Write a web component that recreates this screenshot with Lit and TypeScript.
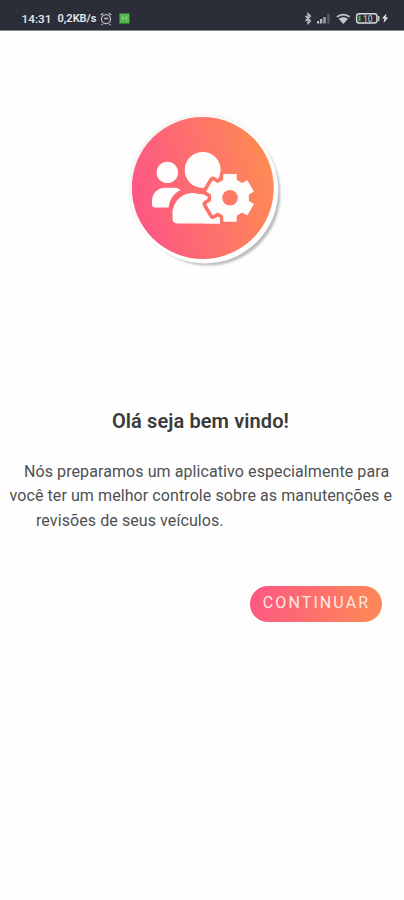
import { LitElement, html, css, svg } from "lit";
import { customElement } from "lit/decorators.js";

const CX = 230;
const CY = 197.8;

/** Six-toothed gear outline centred on (CX, CY). */
function gearPath(): string {
  const pts: string[] = [];
  const put = (x: number, y: number, a: number) => {
    const c = Math.cos(a);
    const s = Math.sin(a);
    pts.push(`${(CX + x * c - y * s).toFixed(2)} ${(CY + x * s + y * c).toFixed(2)}`);
  };
  for (let i = 0; i < 6; i++) {
    const a = (i * Math.PI) / 3;
    put(-8, -16.6, a);
    put(-6.2, -18, a);
    put(-6.2, -23.4, a);
    put(6.2, -23.4, a);
    put(6.2, -18, a);
    put(8, -16.6, a);
  }
  return `M${pts.join("L")}Z`;
}

@customElement("app-status")
export class AppStatus extends LitElement {
  static styles = css`
    :host {
      display: flex;
      align-items: center;
      height: 31px;
      box-sizing: border-box;
      padding: 7px 14px 0 21.500px;
      background: #2b2e39;
      border-bottom: 1px solid #85878d;
      color: #e6e7ea;
      font: 500 11.8px/16px Roboto, "Liberation Sans", sans-serif;
    }
    .time { width: 36px; }
    .rate { width: 41px; font-size: 11px; font-weight: 600; letter-spacing: 0; white-space: nowrap; }
    svg { display: block; }
    .right { margin-left: auto; }
  `;
  render() {
    return html`
      <span class="time">14:31</span>
      <span class="rate">0,2KB/s</span>
      <svg width="32" height="16" viewBox="99 11 32 16" fill="none" stroke="#b9bbc1" stroke-width="1.300">
        <circle cx="106" cy="19.200" r="4.500" />
        <path d="M104 18.500h4.200M100.700 15l2.500-1.800M111.300 15l-2.500-1.800M102.500 24l-1 1M109.500 24l1 1" />
        <rect x="119.500" y="13.500" width="10" height="10" fill="#52b648" stroke="none" />
        <path d="M122.500 16v4.500M126.500 16v4.500M122.500 18.300h4" stroke="#83cf78" stroke-width="1" />
      </svg>
      <svg class="right" width="88" height="16" viewBox="302 11 88 16" fill="none">
        <path d="M305.500 16l5 5-2.500 2.500v-10l2.500 2.500-5 5" stroke="#c0c2c8" stroke-width="1.300" />
        <path d="M317 23.500v-2.500h2.300v2.500zM320 23.500v-4.500h2.300v4.500z" fill="#b5b7bd" />
        <path d="M323.300 23.500v-6.500h2.500v6.500z" fill="#9b9ea6" />
        <path d="M327.300 23.500v-9.500h2.200v9.500z" fill="#5a5d67" />
        <path d="M336.300 16.200c4-3.400 10-3.400 14 0l-1.300 1.500c-3.400-2.600-8-2.600-11.400 0z" fill="#b9bbc1" />
        <path d="M338.600 18.800c2.900-2.100 6.500-2.100 9.400 0l-4.700 5.200z" fill="#c6c8cd" />
        <rect x="356.600" y="13.800" width="20.300" height="9.200" rx="2.500" stroke="#d9dadd" stroke-width="1.400" />
        <rect x="358.500" y="15.500" width="2" height="5.800" fill="#62a454" />
        <path d="M378.600 16v5" stroke="#d0d1d5" stroke-width="1.600" />
        <text x="363" y="21.500" fill="#b5b7bd" font-size="8.500" font-family="Roboto, sans-serif" font-weight="500">10</text>
        <path d="M386.500 13.500l-4.500 5h2.600l-1.100 4.500 4.700-5.500h-2.600z" fill="#eceded" />
      </svg>
    `;
  }
}

@customElement("app-emblem")
export class AppEmblem extends LitElement {
  static styles = css`
    :host { display: block; width: 170px; height: 170px; }
    svg { display: block; }
  `;
  render() {
    const gear = gearPath();
    return html`<svg width="170" height="170" viewBox="120 105 170 170">
      ${svg`<defs>
        <linearGradient id="warm" gradientUnits="userSpaceOnUse" x1="136" y1="204" x2="270" y2="172">
          <stop offset="0" stop-color="#fd5784" />
          <stop offset="1" stop-color="#fe8a55" />
        </linearGradient>
        <filter id="shade" x="-10%" y="-10%" width="120%" height="120%">
          <feGaussianBlur stdDeviation="1.300" />
        </filter>
      </defs>
      <circle cx="203" cy="188" r="74.500" fill="#f4f4f4" filter="url(#shade)" />
      <circle cx="208.300" cy="193.600" r="72" fill="#b9bbbd" filter="url(#shade)" />
      <circle cx="204.800" cy="190" r="73.500" fill="#fff" />
      <circle cx="202.800" cy="188" r="71" fill="url(#warm)" />
      <g fill="#fffdfc">
        <circle cx="167.300" cy="172.400" r="10.700" />
        <path d="M155 207.600q-3 0-3-3v-3.600c0-7.500 5.500-13.200 13-13.200h9q4 0 6.500 2.300c-7 3.400-10.700 9.500-11.900 17.500z" />
        <circle cx="202.700" cy="169.900" r="18" />
        <path d="M177.500 223.500q-5-.2-5-5v-4c0-13 9-21.500 21-21.500 6 1.500 12 1.600 18 .6l8.500 12v17.900z" />
      </g>
      <path d=${gear} fill="url(#warm)" stroke="url(#warm)" stroke-width="8" stroke-linejoin="round" />
      <path d="M205 219.500h15v4h-15z" fill="#fffdfc" />
      <path d=${gear} fill="#fffdfc" stroke="#fffdfc" stroke-width="1" stroke-linejoin="round" />
      <circle cx="230" cy="197.800" r="7.800" fill="url(#warm)" />`}
    </svg>`;
  }
}

@customElement("app-root")
export class AppRoot extends LitElement {
  static styles = css`
    :host {
      display: flex;
      flex-direction: column;
      height: 900px;
      background: #fefefe;
      color: #3e3e3e;
      font-family: Roboto, "Liberation Sans", sans-serif;
    }
    app-emblem { margin: 74px 0 0 120px; }
    h1 {
      margin: 132px 0 0;
      padding-right: 3px;
      text-align: center;
      font-size: 20px;
      line-height: 28px;
      font-weight: 600;
      letter-spacing: 0.100px;
      color: #3a3a3a;
    }
    .copy { margin: 25px 0 0; font-size: 16px; line-height: 24.300px; letter-spacing: 0.085px; color: #505050; }
    .line { display: block; white-space: nowrap; }
    .first { padding-left: 24px; }
    .second { padding-left: 9.500px; }
    .third { padding-left: 36px; }
    button {
      align-self: flex-end;
      width: 132px;
      height: 36px;
      margin: 53px 22px 0 0;
      padding: 0 0 1px 1px;
      border: 0;
      border-radius: 18px;
      background: linear-gradient(103deg, #fd5784, #fe8a55);
      color: #ffe9e2;
      font: 400 16px/34px Roboto, "Liberation Sans", sans-serif;
      letter-spacing: 2.100px;
      white-space: nowrap;
    }
  `;
  render() {
    return html`
      <app-status></app-status>
      <app-emblem></app-emblem>
      <h1>Olá seja bem vindo!</h1>
      <p class="copy">
        <span class="line first">Nós preparamos um aplicativo especialmente para</span>
        <span class="line second">você ter um melhor controle sobre as manutenções e</span>
        <span class="line third">revisões de seus veículos.</span>
      </p>
      <button>CONTINUAR</button>
    `;
  }
}
